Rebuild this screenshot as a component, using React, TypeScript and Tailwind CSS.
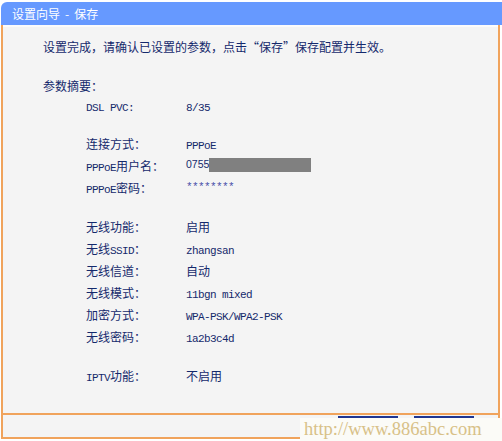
import React from "react";

const cjk = { fontFamily: '"Noto Sans CJK SC", "Noto Sans", sans-serif' };
const mono = { fontFamily: '"Liberation Mono", "DejaVu Sans Mono", monospace' };

type Part = { t: string; latin?: boolean };

function Text({ parts }: { parts: Part[] }) {
  return (
    <span className="whitespace-pre">
      {parts.map((p, i) =>
        p.latin ? (
          <span key={i} className="text-[11px] tracking-[-0.6px]" style={mono}>
            {p.t}
          </span>
        ) : (
          <span key={i} className="text-[12px]" style={cjk}>
            {p.t}
          </span>
        )
      )}
    </span>
  );
}

function Row({
  label,
  value,
  extra,
  className = "",
}: {
  label: Part[];
  value: React.ReactNode;
  extra?: React.ReactNode;
  className?: string;
}) {
  return (
    <div className={`flex h-[22px] items-center pl-[83px] ${className}`}>
      <div className="w-[100px] shrink-0">
        <Text parts={label} />
      </div>
      <div className="flex items-center">
        {value}
        {extra}
      </div>
    </div>
  );
}

export default function App() {
  return (
    <div className="relative h-[441px] w-[502px] overflow-hidden bg-white text-[#14296c]">
      {/* title bar */}
      <div
        className="ml-[1px] mt-[2px] flex h-[23px] items-center whitespace-pre rounded-tl-[6px] bg-[#6699ff] pl-[11px] text-[12px] text-white"
        style={cjk}
      >
        设置向导<span className="px-[5px]">-</span>保存
      </div>

      {/* body */}
      <div className="ml-[1px] w-[499px] border-x-2 border-b-2 border-[#f0a35c] bg-[#f4f4f4]">
        <div className="h-[388px] border-t-2 border-[#fbfbfb] pt-[8px]">
          <div className="flex h-[22px] items-center pl-[40px]">
            <Text parts={[{ t: "设置完成，请确认已设置的参数，点击“保存”保存配置并生效。" }]} />
          </div>
          <div className="mt-[17px] flex h-[22px] items-center pl-[40px]">
            <Text parts={[{ t: "参数摘要：" }]} />
          </div>

          <Row
            className="mt-[-2px]"
            label={[{ t: "DSL PVC:", latin: true }]}
            value={<Text parts={[{ t: "8/35", latin: true }]} />}
          />

          <Row
            className="mt-[16px]"
            label={[{ t: "连接方式：" }]}
            value={<Text parts={[{ t: "PPPoE", latin: true }]} />}
          />
          <Row
            label={[{ t: "PPPoE", latin: true }, { t: "用户名：" }]}
            value={
              <span className="text-[10.5px]" style={{ fontFamily: '"Liberation Sans", Arial, sans-serif' }}>
                0755
              </span>
            }
            extra={<span className="inline-block h-[14px] w-[102px] bg-[#808080]" />}
          />
          <Row
            label={[{ t: "PPPoE", latin: true }, { t: "密码：" }]}
            value={
              <span className="text-[11px] tracking-[-0.6px] text-[#4a4fa8]" style={mono}>
                ********
              </span>
            }
          />

          <Row
            className="mt-[17px]"
            label={[{ t: "无线功能：" }]}
            value={<Text parts={[{ t: "启用" }]} />}
          />
          <Row
            label={[{ t: "无线" }, { t: "SSID", latin: true }, { t: "：" }]}
            value={<Text parts={[{ t: "zhangsan", latin: true }]} />}
          />
          <Row
            label={[{ t: "无线信道：" }]}
            value={<Text parts={[{ t: "自动" }]} />}
          />
          <Row
            label={[{ t: "无线模式：" }]}
            value={<Text parts={[{ t: "11bgn mixed", latin: true }]} />}
          />
          <Row
            label={[{ t: "加密方式：" }]}
            value={<Text parts={[{ t: "WPA-PSK/WPA2-PSK", latin: true }]} />}
          />
          <Row
            label={[{ t: "无线密码：" }]}
            value={<Text parts={[{ t: "1a2b3c4d", latin: true }]} />}
          />

          <Row
            className="mt-[17px]"
            label={[{ t: "IPTV", latin: true }, { t: "功能：" }]}
            value={<Text parts={[{ t: "不启用" }]} />}
          />
        </div>

        {/* footer with buttons */}
        <div className="flex h-[24px] items-start justify-end gap-[16px] border-t-2 border-[#f0a35c] pr-[24px] pt-[1px]">
          <div className="h-[20px] w-[60px] border-t-2 border-[#1f3591] bg-[#eeeeee]" />
          <div className="h-[20px] w-[60px] border-t-2 border-[#1f3591] bg-[#eeeeee]" />
        </div>
      </div>

      {/* site watermark */}
      <div
        className="absolute left-[300px] top-[418px] flex h-[23px] w-[202px] items-center bg-[#fbfbf7] pl-[4px] text-[18.5px] leading-none text-[#d8c188]"
        style={{ fontFamily: '"Liberation Serif", "Times New Roman", serif' }}
      >
        http://www.886abc.com
      </div>
    </div>
  );
}
